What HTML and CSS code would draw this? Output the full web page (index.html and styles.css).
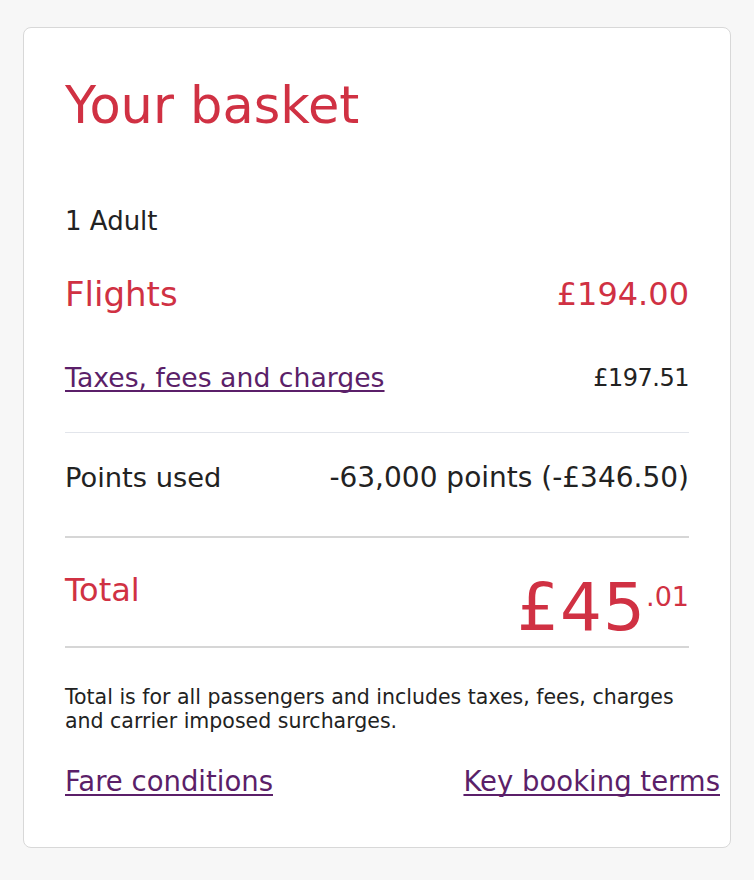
FILE: index.html
```html
<!DOCTYPE html>
<html lang="en">
<head>
<meta charset="utf-8">
<title>Your basket</title>
<link rel="stylesheet" href="styles.css">
</head>
<body>
<main class="page">
  <section class="card">
    <h1 class="title">Your basket</h1>
    <p class="pax">1 Adult</p>
    <div class="row row-flights">
      <span class="label-red">Flights</span>
      <span class="amount-red">£194.00</span>
    </div>
    <div class="row row-taxes">
      <a class="link" href="#">Taxes, fees and charges</a>
      <span class="amount amount-taxes">£197.51</span>
    </div>
    <hr class="rule rule-light">
    <div class="row row-points">
      <span class="label">Points used</span>
      <span class="amount amount-points">-63,000 points (-£346.50)</span>
    </div>
    <hr class="rule rule-grey">
    <div class="row row-total">
      <span class="total-label">Total</span>
      <span class="total-price">£45<sup class="pence">.01</sup></span>
    </div>
    <hr class="rule rule-grey rule-after-total">
    <p class="note">Total is for all passengers and includes taxes, fees, charges and carrier imposed surcharges.</p>
    <div class="links">
      <a class="link link-big" href="#">Fare conditions</a>
      <a class="link link-big" href="#">Key booking terms</a>
    </div>
  </section>
</main>
</body>
</html>
```

FILE: styles.css
```css
* { box-sizing: border-box; }
html, body { margin: 0; padding: 0; }
body {
  background: #f7f7f7;
  font-family: "DejaVu Sans", "Liberation Sans", sans-serif;
  color: #222222;
  width: 754px;
  height: 880px;
}
.page {
  padding: 27px 23px 0 23px;
}
.card {
  background: #ffffff;
  border: 1px solid #d8d8d8;
  border-radius: 8px;
  padding: 50px 41px 50px 41px;
}
.title {
  margin: 0;
  font-size: 51px;
  line-height: 56px;
  font-weight: 400;
  color: #d03143;
}
.pax {
  margin: 72px 0 0 0;
  font-size: 26px;
  line-height: 30px;
}
.row {
  display: flex;
  justify-content: space-between;
  align-items: center;
}
.row-flights { margin-top: 38px; height: 40px; }
.row-taxes { margin-top: 48px; height: 32px; }
.row-points { margin-top: 29px; height: 32px; }
.row-total { margin-top: 32px; align-items: flex-start; }
.label-red {
  font-size: 34px;
  line-height: 40px;
  color: #d03143;
}
.amount-red {
  font-size: 32px;
  line-height: 40px;
  color: #d03143;
}
.label {
  font-size: 27.3px;
  line-height: 32px;
  color: #222222;
}
.amount {
  font-size: 27px;
  line-height: 32px;
  color: #222222;
}
.amount-taxes {
  font-size: 24px;
  letter-spacing: -0.5px;
}
.amount-points {
  font-size: 28px;
}
.link {
  font-size: 26.7px;
  line-height: 32px;
  color: #5b1f69;
  text-decoration: underline;
  text-decoration-thickness: 2px;
  text-underline-offset: 3px;
  text-decoration-skip-ink: none;
}
.rule {
  border: 0;
  margin: 0;
  display: block;
}
.rule-light {
  margin-top: 38px;
  height: 1px;
  background: #e2e5eb;
}
.rule-grey {
  margin-top: 42px;
  height: 2px;
  background: #d6d6d6;
}
.rule-after-total { margin-top: 6px; }
.total-label {
  font-size: 32px;
  line-height: 40px;
  color: #d03143;
}
.total-price {
  margin-top: 6px;
  font-size: 66px;
  letter-spacing: 1px;
  line-height: 64px;
  color: #d03143;
}
.pence {
  font-size: 27px;
  letter-spacing: 0;
  vertical-align: top;
  line-height: 26px;
  position: relative;
  top: 8px;
}
.note {
  margin: 37px 0 0 0;
  font-size: 20.5px;
  line-height: 24px;
}
.links {
  margin: 32px -31px 0 0;
  display: flex;
  justify-content: space-between;
}
.link-big {
  font-size: 27.5px;
  line-height: 32px;
}
```
